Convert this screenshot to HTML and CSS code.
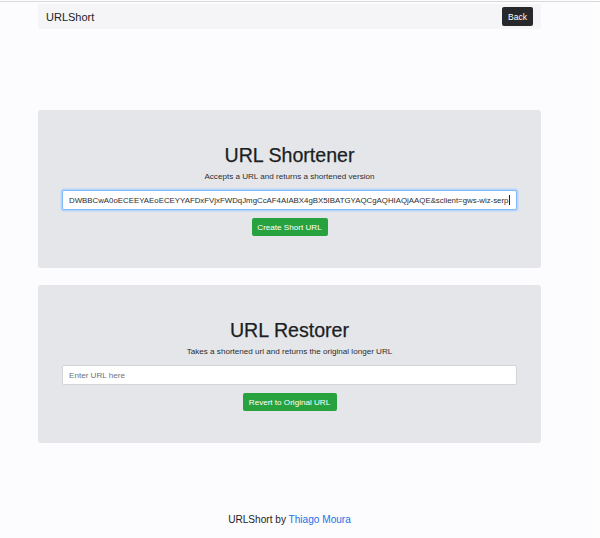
FILE: index.html
```html
<!DOCTYPE html>
<html>
<head>
<meta charset="utf-8">
<link rel="stylesheet" href="styles.css">
</head>
<body>
<div class="topline"></div>
<div class="page">
  <nav class="navbar">
    <span class="brand">URLShort</span>
    <button class="btn btn-dark">Back</button>
  </nav>
  <section class="card first">
    <h1 class="title">URL Shortener</h1>
    <p class="lead">Accepts a URL and returns a shortened version</p>
    <div class="input focus"><span class="val">DWBBCwA0oECEEYAEoECEYYAFDxFVjxFWDqJmgCcAF4AIABX4gBX5IBATGYAQCgAQHIAQjAAQE&amp;sclient=gws-wiz-serp</span><span class="caret"></span></div>
    <button class="btn btn-green b1">Create Short URL</button>
  </section>
  <section class="card second">
    <h1 class="title">URL Restorer</h1>
    <p class="lead">Takes a shortened url and returns the original longer URL</p>
    <div class="input"><span class="ph">Enter URL here</span></div>
    <button class="btn btn-green b2">Revert to Original URL</button>
  </section>
  <footer class="footer">URLShort by <a href="#">Thiago Moura</a></footer>
</div>
</body>
</html>
```

FILE: styles.css
```css
html, body {
  margin: 0;
  padding: 0;
  background: linear-gradient(to right, #fcfbfd 0, #fcfbfd 592px, #fdfdfe 592px);
  font-family: "Liberation Sans", Arial, sans-serif;
  color: #212529;
  height: 538px;
  overflow: hidden;
}
.topline {
  height: 1px;
  margin-top: 1px;
  background: #d9d8dc;
}
.page {
  width: 503px;
  margin-left: 38px;
  display: flex;
  flex-direction: column;
}
.navbar {
  margin-top: 2px;
  height: 25px;
  background: #f5f4f7;
  display: flex;
  align-items: center;
  justify-content: space-between;
  padding: 0 8px;
  border-radius: 2px;
}
.brand {
  font-size: 11px;
  color: #222;
}
.btn {
  border: none;
  font-family: inherit;
  color: #fff;
  border-radius: 2px;
  padding: 0;
  cursor: pointer;
}
.btn-dark {
  background: #26282c;
  width: 31px;
  height: 19px;
  font-size: 8.5px;
}
.card {
  background: #e5e6ea;
  border-radius: 3px;
  height: 158px;
  display: flex;
  flex-direction: column;
  align-items: center;
  box-sizing: border-box;
}
.first {
  margin-top: 81px;
  padding-top: 33px;
}
.second {
  margin-top: 17px;
  padding-top: 33px;
}
.title {
  margin: 0;
  font-weight: 400;
  font-size: 19.6px;
  line-height: 24px;
  color: #1b1e22;
  -webkit-text-stroke: 0.25px #1b1e22;
}
.lead {
  margin: 4px 0 0;
  font-size: 8.1px;
  line-height: 11px;
  color: #2a2d31;
}
.input {
  margin-top: 8px;
  width: 455px;
  height: 20px;
  box-sizing: border-box;
  background: #fff;
  border: 1px solid #d3d5d9;
  border-radius: 2px;
  display: flex;
  align-items: center;
  padding-left: 6px;
  font-size: 7.85px;
  white-space: nowrap;
  overflow: hidden;
}
.input.focus {
  border-color: #80b8f8;
  box-shadow: 0 0 0 1.5px #b7d6fb;
}
.val {
  color: #2b2e32;
}
.caret {
  display: inline-block;
  width: 1px;
  height: 10px;
  background: #222;
  margin-left: 0.5px;
}
.ph {
  color: #6c727a;
  font-size: 8.1px;
}
.btn-green {
  background: #28a23f;
  height: 18px;
  font-size: 8.1px;
  margin-top: 8px;
}
.b1 { width: 76px; }
.b2 { width: 94px; }
.footer {
  margin-top: 71px;
  text-align: center;
  font-size: 10.1px;
  color: #222;
}
.footer a {
  color: #1a73e8;
  text-decoration: none;
}
```
